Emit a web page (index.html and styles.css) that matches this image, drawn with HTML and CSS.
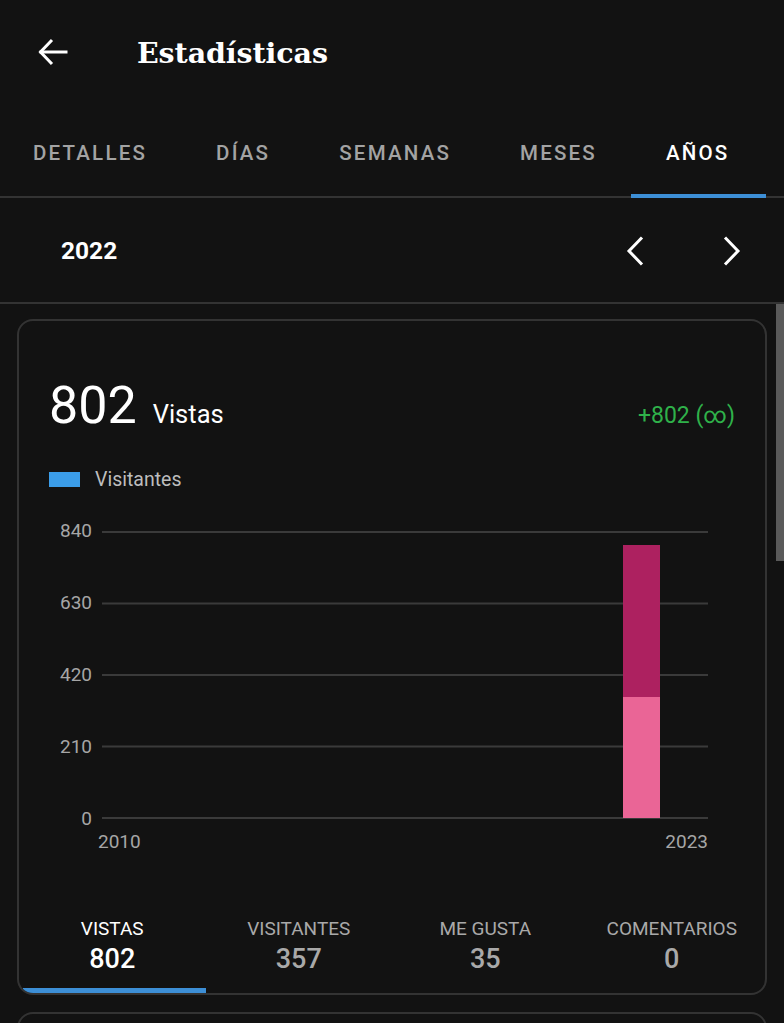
FILE: index.html
```html
<!DOCTYPE html>
<html lang="es">
<head>
<meta charset="utf-8">
<title>Estadísticas</title>
<link rel="stylesheet" href="styles.css">
</head>
<body>
<div class="app">
  <header class="topbar">
    <span class="back">
      <svg width="32" height="32" viewBox="0 0 32 32" fill="none" stroke="#fff" stroke-width="3" stroke-linecap="square">
        <path d="M4 16 H29"/>
        <path d="M15 4 L3.5 16 L15 28" stroke-linejoin="miter" stroke-linecap="butt"/>
      </svg>
    </span>
    <h1 class="title">Estadísticas</h1>
  </header>

  <nav class="tabs">
    <span class="tab">DETALLES</span>
    <span class="tab">DÍAS</span>
    <span class="tab">SEMANAS</span>
    <span class="tab">MESES</span>
    <span class="tab active">AÑOS</span>
  </nav>

  <div class="period">
    <span class="year">2022</span>
    <div class="arrows">
      <svg width="20" height="30" viewBox="0 0 20 30" fill="none" stroke="#fff" stroke-width="3"><path d="M17 1.5 L4 15 L17 28.5"/></svg>
      <svg width="20" height="30" viewBox="0 0 20 30" fill="none" stroke="#fff" stroke-width="3"><path d="M3 1.5 L16 15 L3 28.5"/></svg>
    </div>
  </div>

  <div class="scroll">
    <section class="card">
      <div class="summary">
        <div class="total"><span class="big">802</span><span class="unit">Vistas</span></div>
        <span class="delta">+802 (∞)</span>
      </div>
      <div class="legend"><span class="swatch"></span><span>Visitantes</span></div>

      <div class="chart">
        <div class="yaxis">
          <span>840</span><span>630</span><span>420</span><span>210</span><span>0</span>
        </div>
        <div class="plot">
          <svg width="606" height="288" viewBox="0 0 606 288">
            <g stroke="#3a3a3a" stroke-width="2">
              <line x1="0" y1="1" x2="606" y2="1"/>
              <line x1="0" y1="72.5" x2="606" y2="72.5"/>
              <line x1="0" y1="144" x2="606" y2="144"/>
              <line x1="0" y1="215.5" x2="606" y2="215.5"/>
              <line x1="0" y1="287" x2="606" y2="287"/>
            </g>
            <rect x="521" y="14" width="37" height="152" fill="#ad2160"/>
            <rect x="521" y="166" width="37" height="121" fill="#ea6596"/>
          </svg>
          <div class="xaxis"><span>2010</span><span>2023</span></div>
        </div>
      </div>

      <div class="stats">
        <div class="stat active"><span class="label">VISTAS</span><span class="value">802</span></div>
        <div class="stat"><span class="label">VISITANTES</span><span class="value">357</span></div>
        <div class="stat"><span class="label">ME GUSTA</span><span class="value">35</span></div>
        <div class="stat"><span class="label">COMENTARIOS</span><span class="value">0</span></div>
      </div>
    </section>
    <section class="card next"></section>
    <span class="scrollbar"></span>
  </div>
</div>
</body>
</html>
```

FILE: styles.css
```css
* { box-sizing: border-box; }
html, body { margin: 0; padding: 0; background: #121212; }
body {
  font-family: Roboto, "Noto Sans", sans-serif;
  color: #fff;
  width: 784px;
  height: 1023px;
  overflow: hidden;
}
.app { display: flex; flex-direction: column; }

.topbar {
  height: 106px;
  display: flex;
  align-items: center;
  padding-left: 37px;
}
.back { display: flex; width: 32px; height: 32px; margin-top: -2px; }
.title {
  margin: 0 0 0 68px;
  font-family: "DejaVu Serif", "Liberation Serif", serif;
  font-weight: bold;
  font-size: 28.5px;
  letter-spacing: -0.1px;
  color: #fff;
}

.tabs {
  height: 92px;
  display: flex;
  border-bottom: 2px solid #333;
  margin-left: -2px;
}
.tab {
  padding: 3px 34.5px 0 34.5px;
  display: flex;
  align-items: center;
  font-weight: 500;
  font-size: 20.5px;
  letter-spacing: 2.2px;
  color: #a3a3a3;
  position: relative;
}
.tab:first-child { padding-left: 35px; }
.tab.active { color: #fff; }
.tab.active::after {
  content: "";
  position: absolute;
  left: 0; right: -2px; bottom: -2px;
  height: 4px;
  background: #3d8fd6;
}

.period {
  height: 106px;
  border-bottom: 2px solid #333;
  display: flex;
  align-items: center;
  justify-content: space-between;
  padding: 0 42px 0 61px;
}
.year { font-size: 24.5px; font-weight: bold; }
.arrows { display: flex; gap: 77px; padding-top: 2px; }

.scroll { position: relative; padding: 15px 17px 0 17px; display: flex; flex-direction: column; gap: 17px; }
.scrollbar {
  position: absolute;
  right: 0; top: 0;
  width: 8px; height: 257px;
  background: #5a5a5a;
}
.card {
  border: 2px solid #333;
  border-radius: 16px;
  height: 676px;
  display: flex;
  flex-direction: column;
  overflow: hidden;
}
.card.next { height: 60px; }

.summary {
  display: flex;
  justify-content: space-between;
  align-items: baseline;
  padding: 55px 30px 0 30px;
}
.total { display: flex; align-items: baseline; gap: 16px; }
.big { font-size: 52px; line-height: 60px; font-weight: 400; }
.unit { font-size: 25.5px; }
.delta { font-size: 23px; color: #2fb14a; }

.legend {
  display: flex;
  align-items: center;
  gap: 15px;
  padding: 32px 0 0 30px;
  font-size: 19.5px;
  color: #bdbdbd;
}
.swatch { width: 31px; height: 15px; background: #3b9de9; }

.chart {
  display: flex;
  padding: 40px 0 0 0;
}
.yaxis {
  width: 73px;
  height: 308px;
  display: flex;
  flex-direction: column;
  justify-content: space-between;
  align-items: flex-end;
  font-size: 19px;
  color: #a6a6a6;
  margin-top: -10px;
  line-height: 20px;
}
.plot { margin-left: 10px; display: flex; flex-direction: column; }
.plot svg { display: block; }
.xaxis {
  display: flex;
  justify-content: space-between;
  font-size: 19px;
  color: #a6a6a6;
  padding: 11px 0 0 0;
  margin-left: -4px;
}

.stats {
  margin-top: auto;
  display: grid;
  grid-template-columns: repeat(4, 1fr);
}
.stat {
  display: flex;
  flex-direction: column;
  align-items: center;
  height: 76px;
  position: relative;
  color: #a9a9a9;
}
.stat.active { color: #fff; }
.stat.active::after {
  content: "";
  position: absolute;
  left: 4px; right: 0; bottom: 0;
  height: 5px;
  background: #3d8fd6;
}
.label { font-size: 19px; line-height: 24px; }
.value { font-size: 27px; font-weight: 500; line-height: 37px; }
```
